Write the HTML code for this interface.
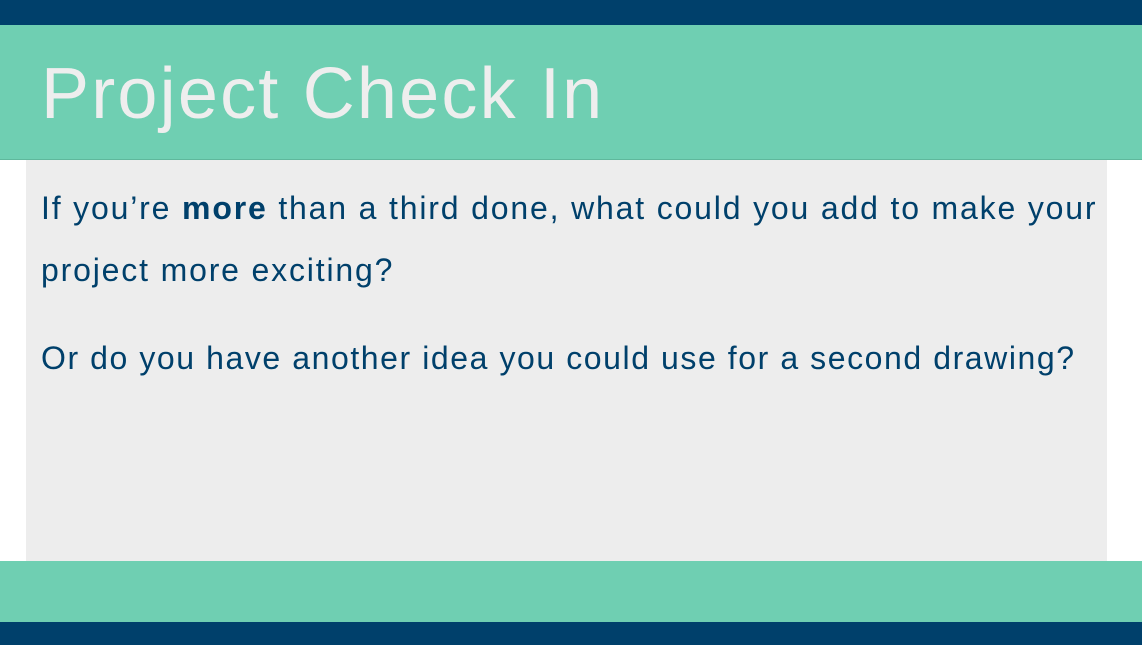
<!DOCTYPE html>
<html><head><style>
html,body{margin:0;padding:0;width:1142px;height:645px;overflow:hidden;background:#fff;font-family:"Liberation Sans",sans-serif;}
.top{position:absolute;left:0;top:0;width:1142px;height:25px;background:#00406b;}
.hdr{position:absolute;left:0;top:25px;width:1142px;height:134px;background:#6fcfb2;border-bottom:1px solid #5fb89c;}
.hdr h1{margin:0;position:absolute;left:41px;top:24px;font-weight:normal;font-size:72px;color:#eeeeee;line-height:90px;letter-spacing:2.2px;white-space:nowrap;}
.body{position:absolute;left:26px;top:160px;width:1081px;height:401px;background:#ededed;}
.body p{margin:0;position:absolute;left:15px;font-size:32px;color:#00406b;line-height:62px;letter-spacing:1.57px;white-space:nowrap;}
.ft{position:absolute;left:0;top:561px;width:1142px;height:61px;background:#6fcfb2;}
.bot{position:absolute;left:0;top:622px;width:1142px;height:23px;background:#00406b;}
</style></head><body>
<div class="top"></div>
<div class="hdr"><h1>Project Check In</h1></div>
<div class="body">
<p style="top:17px;letter-spacing:1.83px">If you’re <b>more</b> than a third done, what could you add to make your<br>project more exciting?</p>
<p style="top:167px">Or do you have another idea you could use for a second drawing?</p>
</div>
<div class="ft"></div>
<div class="bot"></div>
</body></html>
